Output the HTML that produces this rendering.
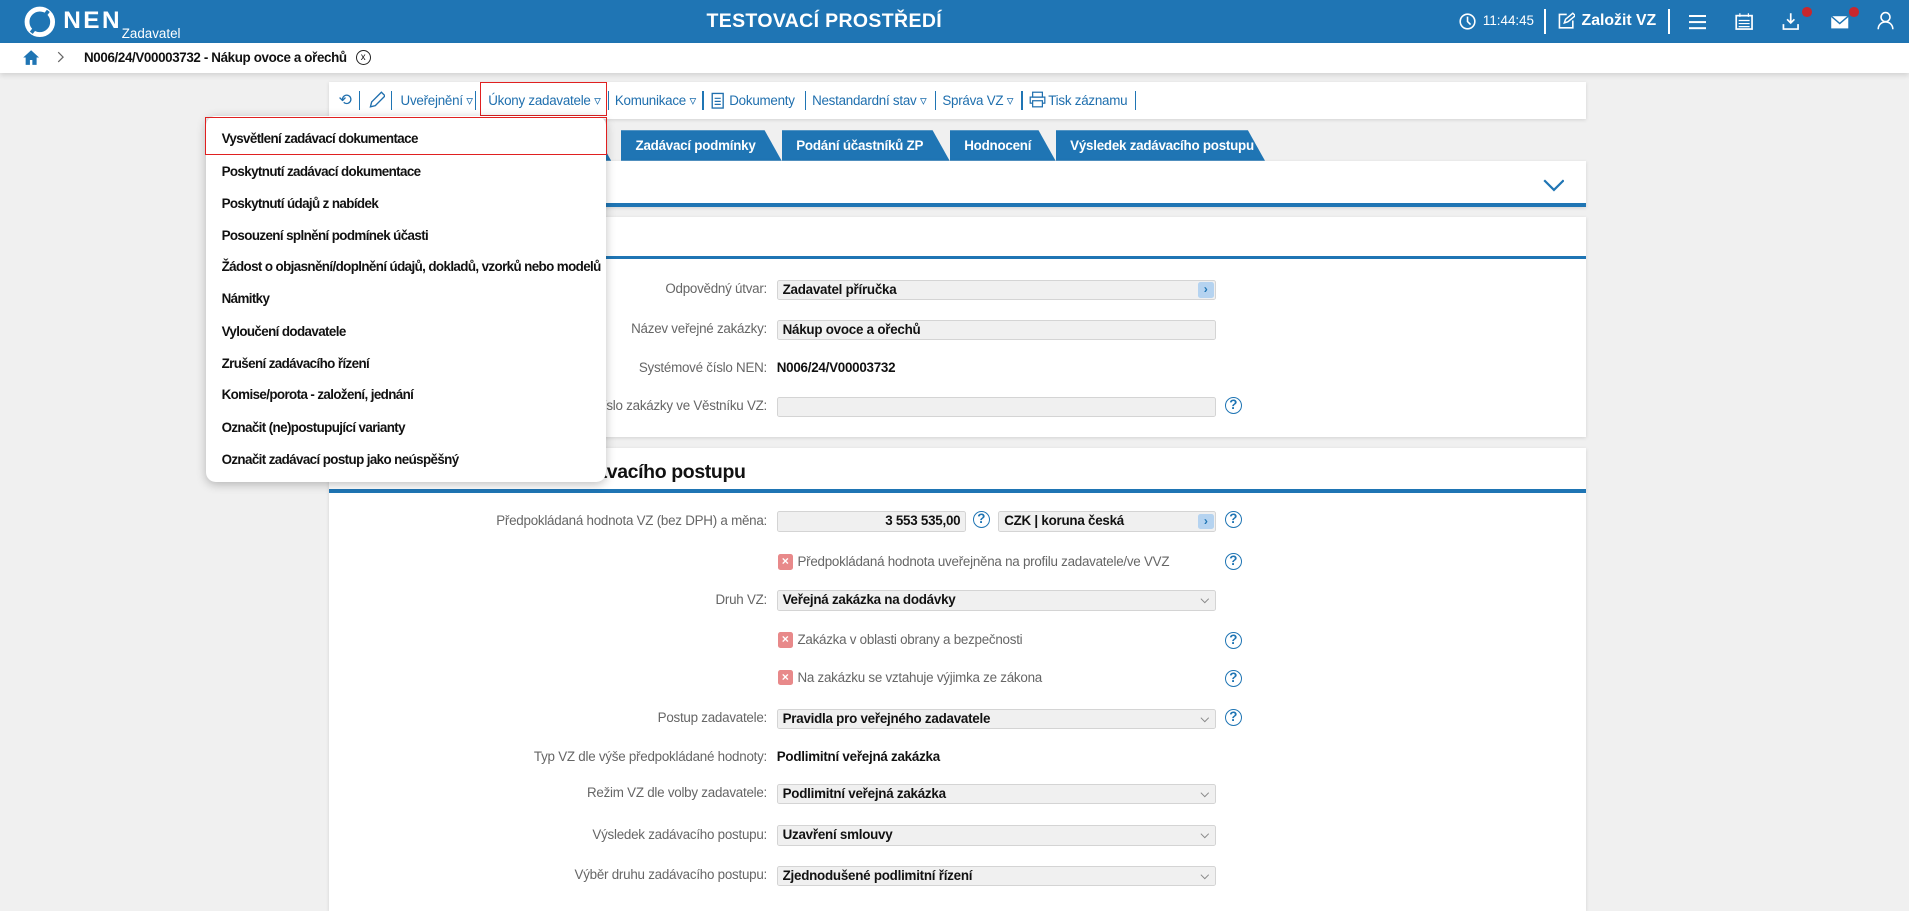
<!DOCTYPE html>
<html><head><meta charset="utf-8">
<style>
html{zoom:1.2175}
body{margin:0;width:1568px;height:744px;overflow:hidden;background:#f0f0f0;font-family:"Liberation Sans",sans-serif;font-size:11px;color:#111;position:relative}
.abs{position:absolute}
.hdr{left:0;top:0;width:1568px;height:35px;background:#1f75b4;color:#fff}
.bc{left:0;top:35px;width:1568px;height:25px;background:#fff;box-shadow:0 2px 4px rgba(0,0,0,.12)}
.panel{background:#fff;left:270px;width:1033px;box-shadow:0 1px 3px rgba(0,0,0,.12)}
.tb{top:67px;height:31px}
.tb span{position:absolute;top:9px;color:#1f6fae;font-size:11px;letter-spacing:-.2px}
.sep{position:absolute;top:8px;width:1px;height:15px;background:#1f75b4}
.tab{position:absolute;top:107px;height:25px;background:#1f75b4;color:#fff;font-weight:bold;font-size:11px;line-height:27px;padding-left:12px;clip-path:polygon(0 0,calc(100% - 14px) 0,100% 100%,0 100%);box-sizing:border-box;letter-spacing:-.2px}
.line{position:absolute;left:0;width:1033px;height:3px;background:#1f75b4}
.lbl{position:absolute;right:calc(1568px - 630px);color:#666;font-size:11px;text-align:right;white-space:nowrap;letter-spacing:-.2px}
.inp{position:absolute;left:638px;height:15px;background:#f0f0f0;border:1px solid #d4d4d4;border-radius:2px;font-size:11px;font-weight:bold;line-height:15px;padding-left:4px;box-sizing:content-box;letter-spacing:-.2px}
.val{position:absolute;left:638px;font-weight:bold;font-size:11px;letter-spacing:-.2px}
.q{position:absolute;width:14px;height:14px;border:1.5px solid #1f75b4;border-radius:50%;color:#1f75b4;font-size:11px;font-weight:bold;text-align:center;box-sizing:border-box;line-height:12px}
.x{position:absolute;left:639px;width:12px;height:13px;background:#e8898a;border-radius:2px;color:#fff;font-size:10px;font-weight:bold;text-align:center;line-height:13px}
.chk{position:absolute;left:655px;color:#666;font-size:11px;letter-spacing:-.2px}
.car{position:absolute;right:5px;top:0;color:#888;font-size:9px}
.arr{position:absolute;right:1px;top:1px;width:13px;height:13px;background:#b5d3f0;border-radius:2px;color:#1f75b4;font-size:10px;text-align:center;line-height:13px}
.menu{left:169px;top:95px;width:329px;height:301px;background:#fff;border-radius:8px;box-shadow:0 2px 8px rgba(0,0,0,.25)}
.menu div{position:absolute;left:13px;font-size:11px;color:#111;font-weight:bold;letter-spacing:-.5px;white-space:nowrap}
</style></head><body>
<div class="abs hdr">
 <svg class="abs" style="left:20px;top:5px" width="26" height="26" viewBox="0 0 26 26"><circle cx="13" cy="13" r="10.5" fill="none" stroke="#fff" stroke-width="4"/><path d="M6 22 L20 4" stroke="#1f75b4" stroke-width="3"/></svg>
 <div class="abs" style="left:52px;top:6px;font-size:20px;font-weight:bold;letter-spacing:2px">NEN</div>
 <div class="abs" style="left:100px;top:21px;font-size:11px">Zadavatel</div>
 <div class="abs" style="left:560px;top:8px;width:234px;text-align:center;font-size:16px;font-weight:bold;letter-spacing:.3px">TESTOVACÍ PROSTŘEDÍ</div>
 <svg class="abs" style="left:1198px;top:11px" width="14" height="14"><circle cx="7" cy="7" r="6" fill="none" stroke="#fff" stroke-width="1.3"/><path d="M7 3v4l2.5 2.5" stroke="#fff" fill="none" stroke-width="1.3"/></svg>
 <div class="abs" style="left:1218px;top:11px;font-size:11px">11:44:45</div>
 <div class="abs" style="left:1268px;top:7px;width:2px;height:21px;background:#fff"></div>
 <svg class="abs" style="left:1279px;top:10px" width="15" height="15"><path d="M8 2H2v11h11V7" fill="none" stroke="#fff" stroke-width="1.3"/><path d="M6 9l1-3 6-5 2 2-6 5z" fill="none" stroke="#fff" stroke-width="1.2"/></svg>
 <div class="abs" style="left:1299px;top:10px;font-size:13px;font-weight:bold">Založit VZ</div>
 <div class="abs" style="left:1370px;top:7px;width:2px;height:21px;background:#fff"></div>
 <div class="abs" style="left:1387px;top:12px;width:14px;height:2px;background:#fff;box-shadow:0 5px 0 #fff,0 10px 0 #fff"></div>
 <svg class="abs" style="left:1425px;top:10px" width="15" height="15"><rect x="1" y="3" width="13" height="11" fill="none" stroke="#fff" stroke-width="1.4"/><path d="M4 1v3M11 1v3M3 7h9M3 9.5h9M3 12h9" stroke="#fff" stroke-width="1"/></svg>
 <svg class="abs" style="left:1463px;top:10px" width="16" height="15"><path d="M8 1v8M5 6l3 3 3-3M2 10v4h12v-4" fill="none" stroke="#fff" stroke-width="1.4"/></svg>
 <div class="abs" style="left:1480px;top:6px;width:8px;height:8px;border-radius:50%;background:#c8272d"></div>
 <svg class="abs" style="left:1503px;top:12px" width="16" height="12"><rect x="1" y="1" width="14" height="10" fill="#fff"/><path d="M1 1l7 6 7-6" fill="none" stroke="#1f75b4" stroke-width="1.2"/></svg>
 <div class="abs" style="left:1519px;top:6px;width:8px;height:8px;border-radius:50%;background:#c8272d"></div>
 <svg class="abs" style="left:1542px;top:9px" width="14" height="16"><circle cx="7" cy="5" r="3.7" fill="none" stroke="#fff" stroke-width="1.3"/><path d="M1 15c0-4 3-6 6-6s6 2 6 6" fill="none" stroke="#fff" stroke-width="1.3"/></svg>
</div>
<div class="abs bc">
 <svg class="abs" style="left:18px;top:5px" width="15" height="14"><path d="M7.5 1L1 7h2v6h3.5V9h2v4H12V7h2z" fill="#1f75b4"/></svg>
 <svg class="abs" style="left:47px;top:7px" width="6" height="10"><path d="M1 1l4 4-4 4" fill="none" stroke="#666"/></svg>
 <div class="abs" style="left:69px;top:6px;font-weight:bold;font-size:11px;letter-spacing:-.3px">N006/24/V00003732 - Nákup ovoce a ořechů</div>
 <div class="abs" style="left:292px;top:6px;width:11px;height:11px;border:1px solid #222;border-radius:50%;font-size:8px;text-align:center;line-height:11px">x</div>
</div>
<div class="abs panel tb">
 <div class="abs" style="left:8px;top:7px;color:#1f6fae;font-size:13px">⟲</div>
 <div class="sep" style="left:25px"></div>
 <svg class="abs" style="left:32px;top:8px" width="14" height="15"><path d="M2 13l1-4 8-8 3 3-8 8z" fill="none" stroke="#1f6fae" stroke-width="1.1"/></svg>
 <div class="sep" style="left:51px"></div>
 <span style="left:59px">Uveřejnění ▿</span>
 <div class="sep" style="left:120px"></div>
 <span style="left:131px">Úkony zadavatele ▿</span>
 <div class="sep" style="left:229px"></div>
 <span style="left:235px">Komunikace ▿</span>
 <div class="sep" style="left:307px"></div>
 <svg class="abs" style="left:314px;top:8px" width="11" height="15"><rect x="1" y="2" width="9" height="12" fill="none" stroke="#1f6fae" stroke-width="1.1"/><path d="M3 6h5M3 8.5h5M3 11h5" stroke="#1f6fae"/></svg>
 <span style="left:329px">Dokumenty</span>
 <div class="sep" style="left:391px"></div>
 <span style="left:397px">Nestandardní stav ▿</span>
 <div class="sep" style="left:498px"></div>
 <span style="left:504px">Správa VZ ▿</span>
 <div class="sep" style="left:569px"></div>
 <svg class="abs" style="left:575px;top:8px" width="14" height="14"><rect x="3" y="1" width="8" height="4" fill="none" stroke="#1f6fae"/><rect x="1" y="5" width="12" height="5" fill="none" stroke="#1f6fae"/><rect x="3" y="8" width="8" height="5" fill="#fff" stroke="#1f6fae"/></svg>
 <span style="left:591px">Tisk záznamu</span>
 <div class="sep" style="left:662px"></div>
</div>
<div class="abs" style="left:394px;top:67px;width:103px;height:27px;border:1px solid #e02020"></div>
<div class="tab" style="left:270px;width:232px"></div>
<div class="tab" style="left:510px;width:132px">Zadávací podmínky</div>
<div class="tab" style="left:642px;width:138px">Podání účastníků ZP</div>
<div class="tab" style="left:780px;width:87px">Hodnocení</div>
<div class="tab" style="left:867px;width:172px">Výsledek zadávacího postupu</div>
<div class="abs panel" style="top:132px;height:38px"><div class="line" style="top:35px"></div>
 <svg class="abs" style="left:997px;top:15px" width="18" height="11"><path d="M1 1l8 8 8-8" fill="none" stroke="#1f75b4" stroke-width="1.8"/></svg></div>
<div class="abs panel" style="top:178px;height:181px"><div class="line" style="top:32px"></div></div>
<div class="abs panel" style="top:368px;height:380px"><div class="line" style="top:34px"></div>
 <div class="abs" style="left:83px;top:11px;font-size:16px;font-weight:bold;letter-spacing:-.3px">Základní údaje zadávacího postupu</div></div>

<div class="lbl" style="top:231px">Odpovědný útvar:</div>
<div class="inp" style="top:230px;width:355px">Zadavatel příručka<div class="arr">›</div></div>
<div class="lbl" style="top:264px">Název veřejné zakázky:</div>
<div class="inp" style="top:263px;width:355px">Nákup ovoce a ořechů</div>
<div class="lbl" style="top:296px">Systémové číslo NEN:</div>
<div class="val" style="top:296px">N006/24/V00003732</div>
<div class="lbl" style="top:327px">Evidenční číslo zakázky ve Věstníku VZ:</div>
<div class="inp" style="top:326px;width:355px"></div>
<div class="q" style="left:1006px;top:326px">?</div>

<div class="lbl" style="top:421px">Předpokládaná hodnota VZ (bez DPH) a měna:</div>
<div class="inp" style="top:420px;width:150px;text-align:right;padding-right:4px;padding-left:0">3 553 535,00</div>
<div class="q" style="left:799px;top:420px">?</div>
<div class="inp" style="top:420px;left:820px;width:173px">CZK | koruna česká<div class="arr">›</div></div>
<div class="q" style="left:1006px;top:420px">?</div>
<div class="x" style="top:455px">×</div><div class="chk" style="top:455px">Předpokládaná hodnota uveřejněna na profilu zadavatele/ve VVZ</div>
<div class="q" style="left:1006px;top:454px">?</div>
<div class="lbl" style="top:486px">Druh VZ:</div>
<div class="inp" style="top:485px;width:355px">Veřejná zakázka na dodávky<span class="car">⌵</span></div>
<div class="x" style="top:519px">×</div><div class="chk" style="top:519px">Zakázka v oblasti obrany a bezpečnosti</div>
<div class="q" style="left:1006px;top:519px">?</div>
<div class="x" style="top:550px">×</div><div class="chk" style="top:550px">Na zakázku se vztahuje výjimka ze zákona</div>
<div class="q" style="left:1006px;top:550px">?</div>
<div class="lbl" style="top:583px">Postup zadavatele:</div>
<div class="inp" style="top:582px;width:355px">Pravidla pro veřejného zadavatele<span class="car">⌵</span></div>
<div class="q" style="left:1006px;top:582px">?</div>
<div class="lbl" style="top:615px">Typ VZ dle výše předpokládané hodnoty:</div>
<div class="val" style="top:615px">Podlimitní veřejná zakázka</div>
<div class="lbl" style="top:645px">Režim VZ dle volby zadavatele:</div>
<div class="inp" style="top:644px;width:355px">Podlimitní veřejná zakázka<span class="car">⌵</span></div>
<div class="lbl" style="top:679px">Výsledek zadávacího postupu:</div>
<div class="inp" style="top:678px;width:355px">Uzavření smlouvy<span class="car">⌵</span></div>
<div class="lbl" style="top:712px">Výběr druhu zadávacího postupu:</div>
<div class="inp" style="top:711px;width:355px">Zjednodušené podlimitní řízení<span class="car">⌵</span></div>

<div class="abs menu">
 <div style="top:13px">Vysvětlení zadávací dokumentace</div>
 <div style="top:40px">Poskytnutí zadávací dokumentace</div>
 <div style="top:66px">Poskytnutí údajů z nabídek</div>
 <div style="top:92px">Posouzení splnění podmínek účasti</div>
 <div style="top:118px">Žádost o objasnění/doplnění údajů, dokladů, vzorků nebo modelů</div>
 <div style="top:144px">Námitky</div>
 <div style="top:171px">Vyloučení dodavatele</div>
 <div style="top:197px">Zrušení zadávacího řízení</div>
 <div style="top:223px">Komise/porota - založení, jednání</div>
 <div style="top:250px">Označit (ne)postupující varianty</div>
 <div style="top:276px">Označit zadávací postup jako neúspěšný</div>
</div>
<div class="abs" style="left:168px;top:96px;width:329px;height:30px;border:1px solid #e02020"></div>
</body></html>
